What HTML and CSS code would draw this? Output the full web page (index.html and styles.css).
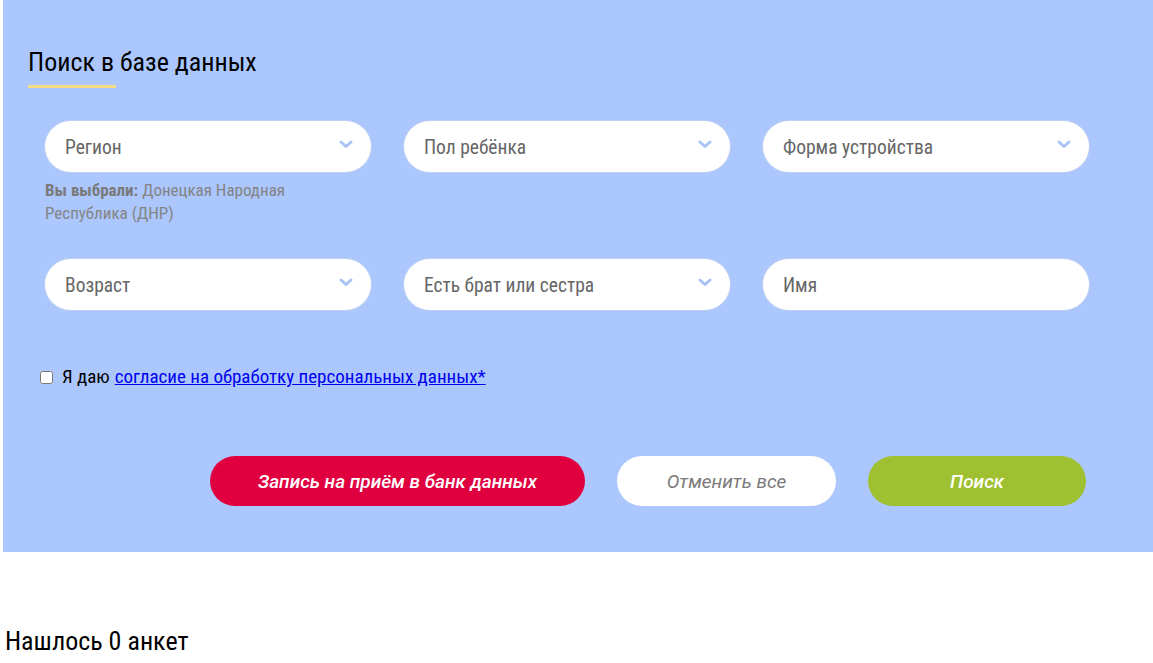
FILE: index.html
```html
<!DOCTYPE html>
<html lang="ru">
<head>
<meta charset="utf-8">
<title>Поиск в базе данных</title>
<link rel="stylesheet" href="styles.css">
</head>
<body>
<section class="panel">
  <h2 class="title">Поиск в базе данных</h2>
  <div class="grid">
    <div class="cell">
      <div class="field"><span>Регион</span><svg class="chev" width="14" height="9" viewBox="0 0 14 9"><path d="M2 2 L7 6.5 L12 2" fill="none" stroke="#a9c3f6" stroke-width="3" stroke-linecap="round" stroke-linejoin="round"/></svg></div>
      <p class="chosen"><b>Вы выбрали:</b> Донецкая Народная Республика (ДНР)</p>
    </div>
    <div class="cell">
      <div class="field"><span>Пол ребёнка</span><svg class="chev" width="14" height="9" viewBox="0 0 14 9"><path d="M2 2 L7 6.5 L12 2" fill="none" stroke="#a9c3f6" stroke-width="3" stroke-linecap="round" stroke-linejoin="round"/></svg></div>
    </div>
    <div class="cell">
      <div class="field"><span>Форма устройства</span><svg class="chev" width="14" height="9" viewBox="0 0 14 9"><path d="M2 2 L7 6.5 L12 2" fill="none" stroke="#a9c3f6" stroke-width="3" stroke-linecap="round" stroke-linejoin="round"/></svg></div>
    </div>
    <div class="cell">
      <div class="field"><span>Возраст</span><svg class="chev" width="14" height="9" viewBox="0 0 14 9"><path d="M2 2 L7 6.5 L12 2" fill="none" stroke="#a9c3f6" stroke-width="3" stroke-linecap="round" stroke-linejoin="round"/></svg></div>
    </div>
    <div class="cell">
      <div class="field"><span>Есть брат или сестра</span><svg class="chev" width="14" height="9" viewBox="0 0 14 9"><path d="M2 2 L7 6.5 L12 2" fill="none" stroke="#a9c3f6" stroke-width="3" stroke-linecap="round" stroke-linejoin="round"/></svg></div>
    </div>
    <div class="cell">
      <div class="field"><span>Имя</span></div>
    </div>
  </div>
  <label class="consent"><input type="checkbox" class="box"> Я даю <a href="#">согласие на обработку персональных данных*</a></label>
  <div class="buttons">
    <button class="btn btn-red">Запись на приём в банк данных</button>
    <button class="btn btn-white">Отменить все</button>
    <button class="btn btn-green">Поиск</button>
  </div>
</section>
<h3 class="found">Нашлось 0 анкет</h3>
</body>
</html>
```
FILE: styles.css
```css
* { box-sizing: border-box; }
body {
  margin: 0;
  font-family: "Roboto Condensed", Roboto, "Liberation Sans", sans-serif;
  font-stretch: condensed;
  background: #fff;
  color: #000;
}
.panel {
  margin-left: 3px;
  background: #abc7fe;
  padding: 47px 0 46px 25px;
}
.title {
  margin: 0;
  font-size: 26px;
  line-height: 30px;
  font-weight: 400;
  color: #000;
}
.title::after {
  content: "";
  display: block;
  width: 88px;
  height: 3px;
  margin-top: 8px;
  background: #f5dc84;
}
.grid {
  margin: 33px 0 0 17px;
  display: grid;
  grid-template-columns: repeat(3, 326px);
  column-gap: 33px;
  row-gap: 34px;
}
.field {
  height: 51px;
  background: #fff;
  border-radius: 26px;
  display: flex;
  align-items: center;
  justify-content: space-between;
  padding: 2px 18px 0 20px;
  font-size: 19.5px;
  color: #666;
  box-shadow: 0 0 0 1px rgba(200, 210, 235, 0.6);
}
.chev { margin-top: -7px; }
.chosen {
  margin: 7px 0 0;
  width: 250px;
  font-size: 17px;
  line-height: 23px;
  color: #848484;
}
.chosen b { color: #7a7a7a; }
.consent {
  display: flex;
  align-items: center;
  margin: 55px 0 0 12px;
  font-size: 19px;
  line-height: 24px;
  color: #000;
  gap: 5px;
}
.box {
  width: 13px;
  height: 13px;
  margin: 0 4px 0 0;
}
.consent a { color: #0000ee; }
.buttons {
  display: flex;
  gap: 32px;
  margin: 67px 0 0 182px;
}
.btn {
  height: 50px;
  border: 0;
  border-radius: 25px;
  font-family: Roboto, "Liberation Sans", sans-serif;
  font-stretch: normal;
  font-size: 19px;
  font-style: italic;
  font-weight: 500;
  color: #fff;
}
.btn-red { width: 375px; background: #e0003f; }
.btn-white { width: 219px; background: #fff; color: #7a7a7a; font-weight: 400; }
.btn-green { width: 218px; background: #9fc031; }
.found {
  margin: 75px 0 0 5px;
  font-size: 26px;
  line-height: 28px;
  font-weight: 400;
}
```
